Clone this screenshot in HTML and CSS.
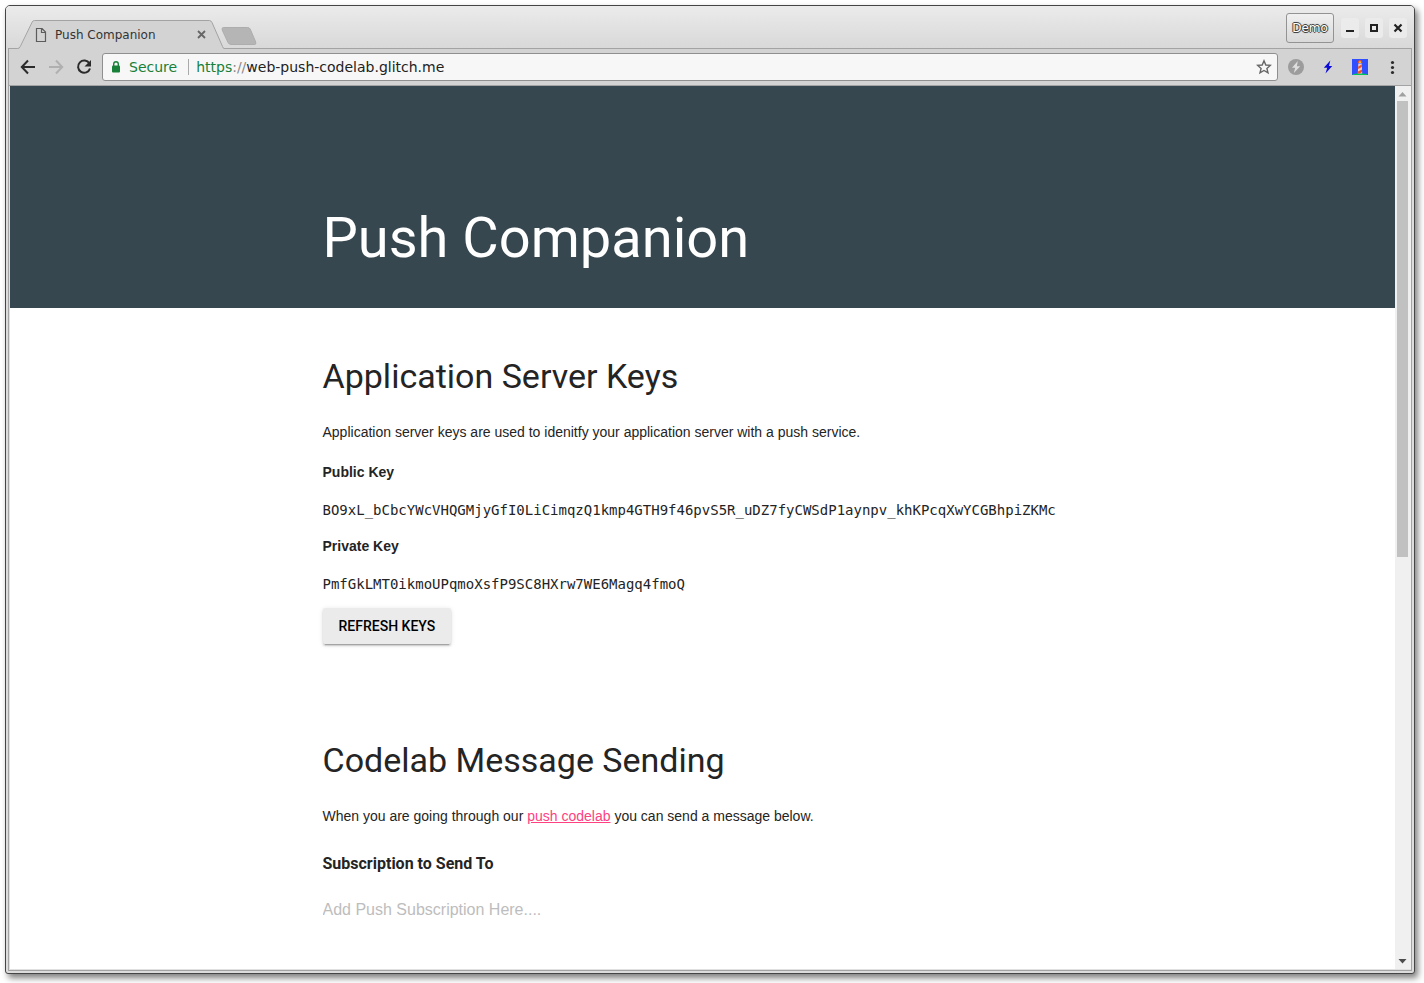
FILE: index.html
```html
<!DOCTYPE html>
<html lang="en">
<head>
<meta charset="utf-8">
<title>Push Companion</title>
<link rel="stylesheet" href="styles.css">
</head>
<body>
<div class="window">
  <header class="titlebar">
    <div class="tab">
      <svg class="tab-shape" viewBox="0 0 216 29" width="216" height="29"><path d="M0 29V28.500H10Q12 28.500 13 26.500L24.500 2Q25.200 .5 26.500 .5H201.500Q203 .5 204 2.500L215 27Q215.500 28.500 216 28.500V29Z" fill="#d3d3d3"/><path d="M0 28.500H9.500Q11.500 28.500 12.300 26.500L24.200 2Q25 .5 26.500 .5H201.500Q203 .5 204 2.500L214.500 26.500Q215.300 28.500 216 28.500" fill="none" stroke="#a3a3a3"/></svg>
      <svg class="page-icon" viewBox="0 0 12 14" width="12" height="14"><path d="M1.500.5H7L10.500 4V13.500H1.500ZM6.500.5V4.500H10.500" fill="none" stroke="#5c5c5c" stroke-width="1.200"/></svg>
      <span class="tab-title">Push Companion</span>
      <button class="tab-close" aria-label="Close tab"><svg viewBox="0 0 9 9" width="9" height="9"><path d="M1 1L8 8M8 1L1 8" stroke="#666" stroke-width="1.800"/></svg></button>
    </div>
    <button class="new-tab" aria-label="New tab"><svg viewBox="0 0 36 20" width="36" height="20"><path d="M2.500 1.500H26.500Q28.500 1.500 29.200 3L34.700 16Q35.500 18.500 33.500 18.500H10Q8 18.500 7 16.500L1.200 4Q.5 1.500 2.500 1.500Z" fill="#b5b5b5" stroke="#adadad"/></svg></button>
    <div class="controls">
      <button class="profile">Demo</button>
      <button class="control" aria-label="Minimize"><svg viewBox="0 0 18 20" width="18" height="20"><path d="M5 13H13" stroke="#222" stroke-width="2"/></svg></button>
      <button class="control" aria-label="Maximize"><svg viewBox="0 0 18 20" width="18" height="20"><path d="M6 7H12V13H6Z" fill="none" stroke="#222" stroke-width="2"/></svg></button>
      <button class="control" aria-label="Close"><svg viewBox="0 0 18 20" width="18" height="20"><path d="M5.500 6.500L12.500 13.500M12.500 6.500L5.500 13.500" stroke="#222" stroke-width="2.200"/></svg></button>
    </div>
  </header>
  <div class="frame">
    <nav class="toolbar">
      <button class="tool" aria-label="Back"><svg viewBox="0 0 16 16" width="16" height="16"><path d="M15 8H2M8 1.500L1.800 8L8 14.500" fill="none" stroke="#2b2b2b" stroke-width="2"/></svg></button>
      <button class="tool" aria-label="Forward" disabled><svg viewBox="0 0 16 16" width="16" height="16"><path d="M1 8H14M8 1.500L14.200 8L8 14.500" fill="none" stroke="#b0b0b0" stroke-width="2"/></svg></button>
      <button class="tool" aria-label="Reload"><svg viewBox="0 0 16 16" width="16" height="16"><path d="M13.400 4.500A6.100 6.100 0 1 0 14 9.500" fill="none" stroke="#2b2b2b" stroke-width="2"/><path d="M15 1V7.500H8.500Z" fill="#2b2b2b"/></svg></button>
      <div class="address">
        <svg class="lock" viewBox="0 0 10 12" width="10" height="12"><path d="M2.700 5.500V3A2.300 2.300 0 0 1 7.300 3V5.500" fill="none" stroke="#188038" stroke-width="1.400"/><rect x="1" y="4.500" width="8" height="7" rx="1" fill="#188038"/></svg>
        <span class="secure">Secure</span>
        <label class="scheme" for="url">https<span class="slashes">://</span></label>
        <input id="url" class="url" type="text" value="web-push-codelab.glitch.me">
        <button class="star" aria-label="Bookmark this page"><svg viewBox="0 0 16 16" width="16" height="16"><path d="M8 1.800L9.800 6L14.300 6.400L10.900 9.400L12 13.900L8 11.500L4 13.900L5.100 9.400L1.700 6.400L6.200 6Z" fill="none" stroke="#666" stroke-width="1.400"/></svg></button>
      </div>
      <div class="extensions">
        <button class="tool" aria-label="AMP"><svg viewBox="0 0 16 16" width="16" height="16"><circle cx="8" cy="8" r="8" fill="#9c9c9c"/><path d="M9.800 2L4 8.800H7.200L5.800 14L12.200 7.200H8.800Z" fill="#dedede"/></svg></button>
        <button class="tool" aria-label="Push tester"><svg viewBox="0 0 16 16" width="16" height="16"><path d="M10.300 1.500L3.800 8.800H7.200L5.500 14.500L12.300 7H9Z" fill="#0b0bd8"/></svg></button>
        <button class="tool" aria-label="Lighthouse"><svg viewBox="0 0 16 16" width="16" height="16"><path d="M0 0H16V16H0Z" fill="#304ffe"/><path d="M0 16Q2 14.200 8 14.200T16 16Z" fill="#00c853"/><path d="M6.300 4.500H9.700L10.200 14.500H5.800Z" fill="#ffccbc"/><path d="M5.500 4L6.500 1.500L8 1L9.500 1.500L10.500 4ZM6.200 7.500L9.800 5.500V8L6.100 10ZM6 12.500L10 10.500V13L7.500 14.500H5.900Z" fill="#f4511e"/><path d="M7 2.500H9V4H7Z" fill="#ffca28"/></svg></button>
        <button class="tool" aria-label="Menu"><svg viewBox="0 0 16 16" width="16" height="16"><g fill="#2b2b2b"><circle cx="8.500" cy="3.500" r="1.600"/><circle cx="8.500" cy="8.500" r="1.600"/><circle cx="8.500" cy="13.500" r="1.600"/></g></svg></button>
      </div>
    </nav>
    <div class="viewport">
      <div class="page">
        <header class="hero"><div class="column"><h1 class="title">Push Companion</h1></div></header>
        <main class="column">
          <section class="section">
            <h2 class="heading">Application Server Keys</h2>
            <p class="text">Application server keys are used to idenitfy your application server with a push service.</p>
            <dl class="keys">
              <dt class="key-name">Public Key</dt>
              <dd class="key"><code>BO9xL_bCbcYWcVHQGMjyGfI0LiCimqzQ1kmp4GTH9f46pvS5R_uDZ7fyCWSdP1aynpv_khKPcqXwYCGBhpiZKMc</code></dd>
              <dt class="key-name">Private Key</dt>
              <dd class="key"><code>PmfGkLMT0ikmoUPqmoXsfP9SC8HXrw7WE6Magq4fmoQ</code></dd>
            </dl>
            <button class="refresh">REFRESH KEYS</button>
          </section>
          <section class="section">
            <h2 class="heading">Codelab Message Sending</h2>
            <p class="text">When you are going through our <a class="link" href="#">push codelab</a> you can send a message below.</p>
            <label class="label" for="subscription">Subscription to Send To</label>
            <textarea id="subscription" class="field" rows="3" placeholder="Add Push Subscription Here...."></textarea>
          </section>
        </main>
      </div>
      <div class="scrollbar">
        <svg class="arrow" viewBox="0 0 15 15" width="15" height="15"><path d="M3.500 10.500L7.500 6L11.500 10.500Z" fill="#a0a0a0"/></svg>
        <div class="track"><div class="thumb"></div></div>
        <svg class="arrow" viewBox="0 0 15 15" width="15" height="15"><path d="M3.500 5L7.500 9.500L11.500 5Z" fill="#4c4c4c"/></svg>
      </div>
    </div>
  </div>
</div>
</body>
</html>
```
FILE: styles.css
```css
* { box-sizing: border-box; }

body {
  margin: 0;
  height: 100vh;
  padding: 5px 9px 9px 5px;
  background: #fff;
  color: #242424;
  font-family: "Liberation Sans", Arial, sans-serif;
  font-size: 14px;
  line-height: 24px;
  overflow: hidden;
}

button {
  display: flex;
  align-items: center;
  justify-content: center;
  flex: none;
  margin: 0;
  padding: 0;
  border: 0;
  background: none;
}

svg { display: block; flex: none; }

.window {
  display: flex;
  flex-direction: column;
  height: 100%;
  padding: 0 2px 2px;
  border: 1px solid #454545;
  border-radius: 5px 5px 3px 3px;
  background: #dcdcdc;
  box-shadow: 3px 4px 6px rgba(0, 0, 0, 0.5);
}

.titlebar {
  display: flex;
  align-items: flex-end;
  flex: none;
  height: 43px;
  margin: 0 -2px;
  padding: 0 7px 0 2px;
  border-radius: 4px 4px 0 0;
  background:
    linear-gradient(#a3a3a3, #a3a3a3) center bottom / calc(100% - 4px) 1px no-repeat,
    linear-gradient(#ebebeb, #d8d8d8);
  font-family: "DejaVu Sans", sans-serif;
}

.tab {
  position: relative;
  display: flex;
  align-items: center;
  width: 216px;
  height: 29px;
  padding: 0 18px 0 27px;
}

.tab-shape { position: absolute; left: 0; top: 0; }
.page-icon, .tab-title, .tab-close { position: relative; }
.tab-title { flex: 1; margin-left: 8px; color: #333; font-size: 12px; }

.new-tab { margin: 0 auto 3px -3px; }

.controls { display: flex; align-items: center; gap: 6px; margin-bottom: 6px; }

.profile {
  width: 48px;
  height: 30px;
  border: 1px solid #939393;
  border-radius: 3px;
  background: linear-gradient(#f0f0f0, #d9d9d9);
  color: #fff;
  font: 12px "DejaVu Sans", sans-serif;
  text-shadow: 1px 0 #444, -1px 0 #444, 0 1px #444, 0 -1px #444, 0 0 2px #444;
}

.control { border-radius: 3px; background: #ebebeb; }
.profile + .control { margin-left: 1px; }

.frame {
  display: flex;
  flex-direction: column;
  flex: 1;
  min-height: 0;
  border: 1px solid #a3a3a3;
  border-top: 0;
}

.toolbar {
  display: flex;
  align-items: center;
  flex: none;
  height: 37px;
  padding: 0 11px;
  border-bottom: 1px solid #a3a3a3;
  background: #d3d3d3;
  font-family: "DejaVu Sans", sans-serif;
  gap: 12px;
}

.address {
  display: flex;
  align-items: center;
  flex: 1;
  height: 28px;
  margin-left: -2px;
  padding: 0 5px 0 8px;
  border: 1px solid #8f8f8f;
  border-radius: 3px;
  background: #f7f7f7;
}

.secure {
  margin: 0 7px 0 8px;
  padding-right: 11px;
  border-right: 1px solid #aaa;
  color: #188038;
  font-size: 14px;
  line-height: 16px;
}

.scheme { color: #188038; }
.slashes { color: #888; }

.url {
  flex: 1;
  min-width: 0;
  padding: 0;
  border: 0;
  background: none;
  color: #222;
  font: 14px "DejaVu Sans", sans-serif;
}

.extensions { display: flex; gap: 16px; margin-left: -2px; }

.viewport {
  display: flex;
  flex: 1;
  min-height: 0;
  border: solid #e0e0e0;
  border-width: 0 0 1px 1px;
}

.page { flex: 1; overflow: hidden; background: #fff; }

.column { width: 100%; max-width: 760px; margin: 0 auto; }

.hero { padding: 114px 0 32px; background: #37474f; color: #fff; }

.title, .heading {
  margin: 0;
  font-family: Roboto, sans-serif;
  font-weight: 400;
}

.title { font-size: 56px; line-height: 76px; }
.heading { font-size: 34px; line-height: 40px; }

.section { padding: 48px 0; }
.text { margin: 24px 0 16px; }

.keys { margin: 0; }
.key-name { font-weight: 700; }
.key { margin: 14px 0 12px; }
.key code { font: 14px/24px "DejaVu Sans Mono", monospace; }

.refresh {
  height: 36px;
  padding: 0 16px;
  border-radius: 2px;
  background: #ebebeb;
  box-shadow: 0 2px 2px rgba(0, 0, 0, 0.14), 0 3px 1px -2px rgba(0, 0, 0, 0.2), 0 1px 5px rgba(0, 0, 0, 0.12);
  color: #000;
  font: 500 14px Roboto, sans-serif;
}

.link { color: #ff4081; }

.label {
  display: block;
  margin: 24px 0 22px;
  font: 700 16px/24px Roboto, sans-serif;
}

.field {
  display: block;
  width: 100%;
  padding: 0;
  border: 0;
  resize: none;
  outline: 0;
  font: 16px/24px "Liberation Sans", Arial, sans-serif;
}

.field::placeholder { color: #bdbdbd; }

.scrollbar {
  display: flex;
  flex-direction: column;
  width: 16px;
  padding-right: 1px;
  background: #f0f0f0;
}

.track { flex: 1; padding: 0 2px; }
.thumb { height: 53.500%; background: #c1c1c1; }
```
